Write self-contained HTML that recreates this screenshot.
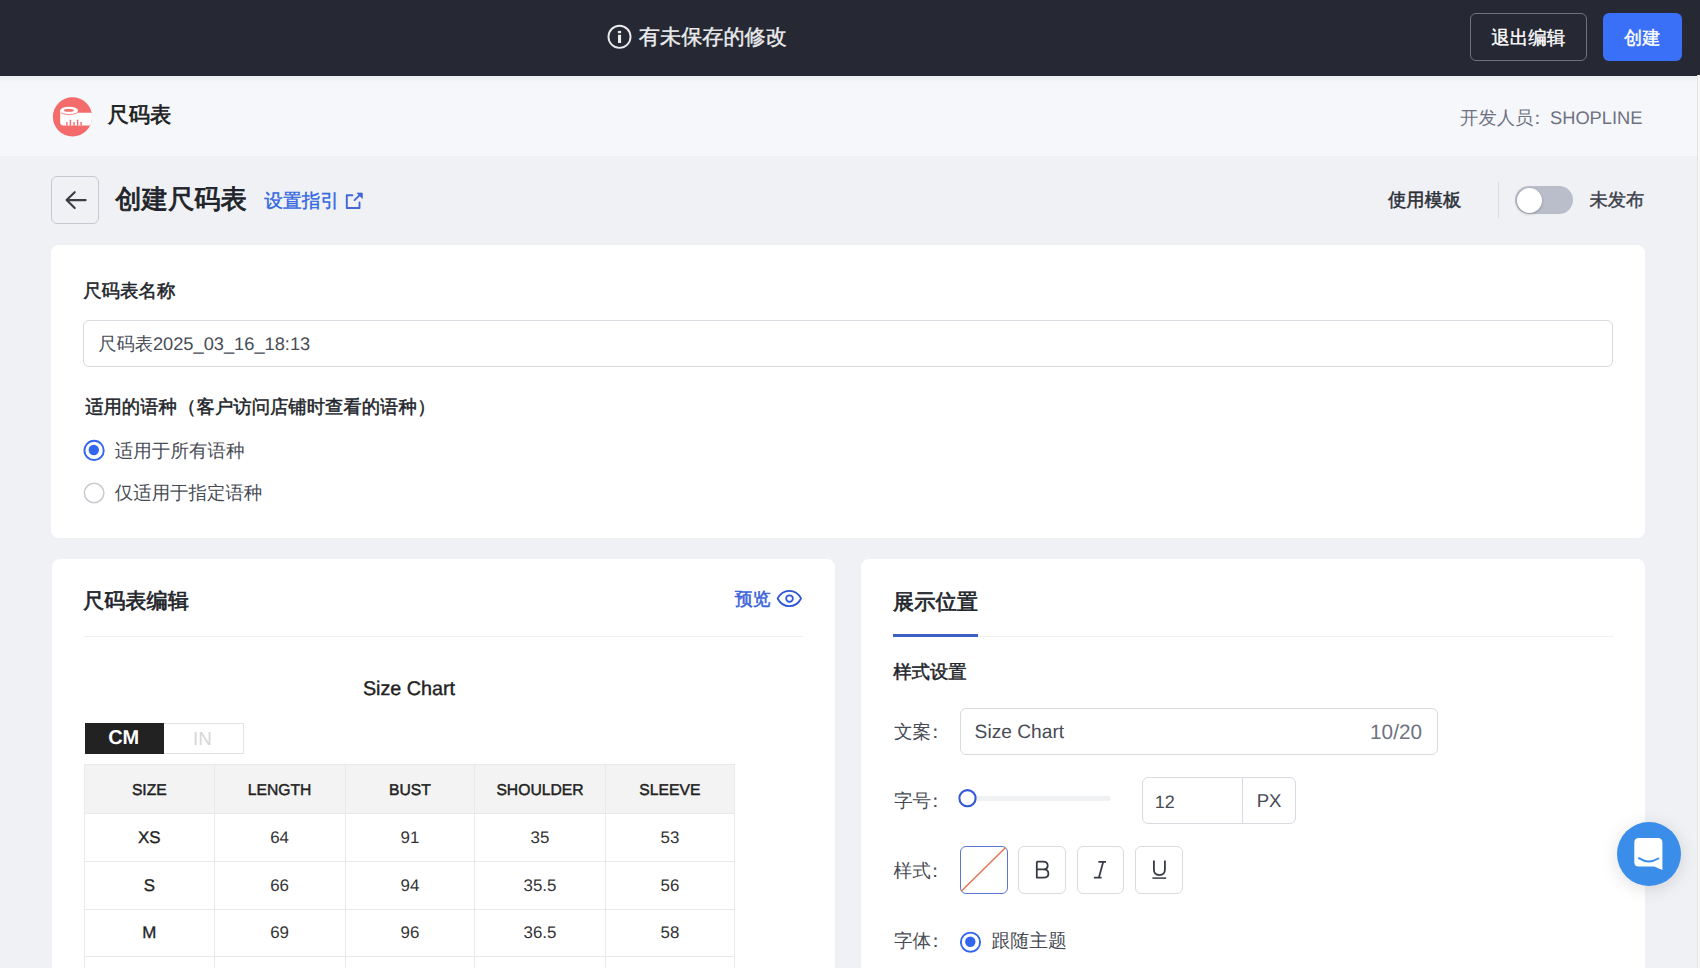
<!DOCTYPE html>
<html><head><meta charset="utf-8">
<style>
*{box-sizing:border-box;margin:0;padding:0}
html,body{width:1700px;height:968px;overflow:hidden}
body{position:relative;text-rendering:geometricPrecision;background:#f0f1f5;font-family:"Liberation Sans",sans-serif;color:#474b55}
.a{position:absolute;white-space:nowrap;line-height:1}
.m{-webkit-text-stroke:0.4px currentColor}
.s{font-weight:400;-webkit-text-stroke:0.5px currentColor}
.s1{-webkit-text-stroke:0.7px currentColor}
.s2{-webkit-text-stroke:0.85px currentColor}
.box{position:absolute}
.th{text-align:center;font-size:15.7px;padding-top:1.7px;color:#1f1f1f;-webkit-text-stroke:0.45px #1f1f1f}
.td{text-align:center;font-size:16.9px;color:#333}
.td.b{color:#1f1f1f;-webkit-text-stroke:0.35px #1f1f1f}

</style></head><body>

<!-- top bar -->
<div class="box" style="left:0;top:0;width:1700px;height:75.7px;background:#262833"></div>
<svg class="box" style="left:600px;top:17px" width="40" height="40" viewBox="600 17 40 40">
  <circle cx="619.5" cy="36.85" r="11.05" fill="none" stroke="#ebebed" stroke-width="1.9"/>
  <rect x="617.9" y="30.9" width="3.2" height="2.3" fill="#ebebed"/>
  <rect x="618" y="34.8" width="3.1" height="8.2" fill="#ebebed"/>
</svg>
<div id="t_info_text" class="a m" style="left:638.85px;top:27.40px;font-size:21.15px;color:#ebebed">有未保存的修改</div>
<div class="box" style="left:1470px;top:13px;width:117px;height:48px;border:1.5px solid #70737c;border-radius:6px"></div>
<div id="t_btn1_text" class="a m" style="left:1491.23px;top:28.72px;font-size:18.51px;color:#fff">退出编辑</div>
<div class="box" style="left:1603px;top:13px;width:79px;height:48px;background:#3a6ff8;border-radius:6px"></div>
<div id="t_btn2_text" class="a m" style="left:1624.06px;top:28.90px;font-size:18.19px;color:#fff">创建</div>

<!-- header -->
<div class="box" style="left:0;top:75.7px;width:1700px;height:80.4px;background:#f6f7fa"></div>
<div class="box" style="left:0;top:75.7px;width:1700px;height:7px;background:linear-gradient(rgba(0,0,0,.035),rgba(0,0,0,0))"></div>
<div class="box" style="left:1697px;top:75px;width:1px;height:893px;background:#e2e3e6"></div>
<div class="box" style="left:1698px;top:75px;width:2px;height:893px;background:#f8f8f9"></div>
<svg class="box" style="left:50px;top:94px" width="46" height="46" viewBox="0 0 46 46">
  <defs><clipPath id="lc"><circle cx="22.5" cy="22.8" r="19.6"/></clipPath></defs>
  <circle cx="22.5" cy="22.8" r="19.6" fill="#f46b6b"/>
  <g clip-path="url(#lc)">
    <path d="M10.2,16.4 V28.4 Q10.2,31.4 13.2,31.4 H46 V18.8 H27 V16.4 Z" fill="#fff"/>
    <ellipse cx="19.1" cy="16.4" rx="8.9" ry="3.6" fill="#fff"/>
    <ellipse cx="18.9" cy="16.4" rx="4.9" ry="1.3" fill="#f46b6b"/>
    <path d="M10.9,18.9 Q19,22.4 27.4,18.9" fill="none" stroke="#f46b6b" stroke-width="0.8"/>
    <rect x="16.2" y="28" width="1.4" height="3.5" fill="#f46b6b"/>
    <rect x="19.7" y="25.7" width="1.4" height="5.8" fill="#f46b6b"/>
    <rect x="23.3" y="28" width="1.4" height="3.5" fill="#f46b6b"/>
    <rect x="26.9" y="25.7" width="1.4" height="5.8" fill="#f46b6b"/>
    <rect x="30.4" y="28" width="1.4" height="3.5" fill="#f46b6b"/>
  </g>
</svg>
<div id="t_hdr_title" class="a s1" style="left:107.53px;top:105.46px;font-size:21.27px;color:#1c1d21">尺码表</div>
<div id="t_dev" class="a" style="left:1460.10px;top:108.70px;font-size:18.30px;color:#6d7282">开发人员<span style="margin-left:-5px">：</span><span style="margin-left:3.5px">SHOPLINE</span></div>

<!-- title row -->
<div class="box" style="left:51.2px;top:176.2px;width:47.6px;height:47.6px;border:1.3px solid #c6c9d1;border-radius:6px"></div>
<svg class="box" style="left:60px;top:185px" width="32" height="32" viewBox="60 185 32 32">
  <path d="M74.7,192.2 L66.6,200.1 L74.7,208 M66.8,200.1 H85.6" fill="none" stroke="#3a3d46" stroke-width="2.15" stroke-linecap="round" stroke-linejoin="round"/>
</svg>
<svg class="box" style="left:340px;top:185px" width="30" height="30" viewBox="340 185 30 30">
  <path d="M352.4,195.3 H346.8 V208 H359.5 V202.4" fill="none" stroke="#4268d8" stroke-width="1.9" stroke-linecap="round" stroke-linejoin="round"/>
  <path d="M354.6,200.2 L361,193.8" fill="none" stroke="#4268d8" stroke-width="1.9" stroke-linecap="round"/>
  <path d="M357,193.1 H362.3 V198.4 Z" fill="#4268d8" stroke="#4268d8" stroke-width="0.8" stroke-linejoin="round"/>
</svg>
<div id="t_title" class="a s2" style="left:115.29px;top:185.98px;font-size:26.32px;color:#202329">创建尺码表</div>
<div id="t_link" class="a m" style="left:264.36px;top:191.68px;font-size:18.69px;color:#3268e0">设置指引</div>
<div id="t_tmpl" class="a s" style="left:1388.09px;top:190.91px;font-size:18.27px;color:#2b2f38">使用模板</div>
<div class="box" style="left:1497.5px;top:182px;width:1.3px;height:36px;background:#d9dbe0"></div>
<div class="box" style="left:1515px;top:186.3px;width:58px;height:28.2px;background:#babecb;border-radius:15px"></div>
<div class="box" style="left:1517px;top:188px;width:25px;height:25px;background:#fff;border-radius:50%;box-shadow:0 1px 3px rgba(0,0,0,.25)"></div>
<div id="t_unpub" class="a m" style="left:1589.40px;top:191.43px;font-size:18.28px;color:#3b3f4a">未发布</div>

<!-- card 1 -->
<div class="box" style="left:51px;top:245px;width:1594.2px;height:292.6px;background:#fff;border-radius:8px"></div>
<div id="t_name_lbl" class="a s" style="left:83.13px;top:282.48px;font-size:18.44px;color:#22252b">尺码表名称</div>
<div class="box" style="left:83.3px;top:320px;width:1529.7px;height:47.3px;border:1.3px solid #d8dadf;border-radius:6px"></div>
<div id="t_input_txt" class="a" style="left:98.15px;top:334.77px;font-size:18.26px;color:#474b55">尺码表2025_03_16_18:13</div>
<div id="t_lang_lbl" class="a s" style="left:85.15px;top:398.45px;font-size:18.35px;color:#22252b">适用的语种<span style="margin-left:1.0px">（</span><span style="margin-left:0.4px">客户访问店铺时查看的语种</span><span style="margin-left:0.6px">）</span></div>
<svg class="box" style="left:80px;top:436px" width="30" height="72" viewBox="80 436 30 72">
  <circle cx="94.1" cy="450.4" r="9.65" fill="#fff" stroke="#3366ee" stroke-width="1.9"/>
  <circle cx="93.8" cy="450" r="5.2" fill="#3366ee"/>
  <circle cx="94.1" cy="493" r="9.75" fill="#fff" stroke="#c9cbd1" stroke-width="1.5"/>
</svg>
<div id="t_r1" class="a" style="left:114.79px;top:441.73px;font-size:18.55px;color:#474b55">适用于所有语种</div>
<div id="t_r2" class="a" style="left:114.81px;top:483.79px;font-size:18.45px;color:#474b55">仅适用于指定语种</div>

<!-- card 2 -->
<div class="box" style="left:51.6px;top:559.1px;width:783px;height:460px;background:#fff;border-radius:8px"></div>
<div id="t_edit_title" class="a s1" style="left:83.04px;top:591.42px;font-size:21.17px;color:#22252b">尺码表编辑</div>
<div id="t_preview" class="a s" style="left:734.87px;top:591.07px;font-size:17.86px;color:#3b63d9">预览</div>
<div class="box" style="left:83.5px;top:636px;width:719.3px;height:1.2px;background:#f0f1f4"></div>
<svg class="box" style="left:772px;top:584px" width="36" height="30" viewBox="772 584 36 30">
  <path d="M777.6,598.5 C781,592.3 785,590.9 789.3,590.9 C793.6,590.9 797.7,592.3 801.1,598.5 C797.7,604.8 793.6,606.2 789.3,606.2 C785,606.2 781,604.8 777.6,598.5 Z" fill="none" stroke="#2e55d6" stroke-width="1.75" stroke-linejoin="round"/>
  <circle cx="789.5" cy="598.6" r="3.35" fill="none" stroke="#2e55d6" stroke-width="1.75"/>
</svg>
<div class="box" style="left:84.5px;top:722.5px;width:79.5px;height:31.5px;background:#222"></div>
<div class="box" style="left:164px;top:722.5px;width:80px;height:31.5px;border:1.2px solid #e3e3e3;border-left:none"></div>
<div id="t_cm" class="a" style="left:108.13px;top:729.37px;font-size:19.96px;font-weight:bold;color:#fff">CM</div>
<div id="t_in" class="a" style="left:192.94px;top:729.71px;font-size:18.81px;color:#d6d6d6">IN</div>
<div id="t_sc" class="a m" style="left:362.90px;top:679.66px;font-size:19.75px;color:#222">Size Chart</div>

<div class="box" style="left:84.5px;top:764.9px;width:650.1px;height:48.9px;background:#f3f3f3"></div>
<div class="box" style="left:84px;top:764px;width:651px;height:1px;background:#e9e9e9"></div>
<div class="box" style="left:84px;top:813px;width:651px;height:1px;background:#e9e9e9"></div>
<div class="box" style="left:84px;top:861px;width:651px;height:1px;background:#e9e9e9"></div>
<div class="box" style="left:84px;top:909px;width:651px;height:1px;background:#e9e9e9"></div>
<div class="box" style="left:84px;top:956px;width:651px;height:1px;background:#e9e9e9"></div>
<div class="box" style="left:84px;top:1004px;width:651px;height:1px;background:#e9e9e9"></div>
<div class="box" style="left:84px;top:764px;width:1px;height:240px;background:#e9e9e9"></div>
<div class="box" style="left:214px;top:764px;width:1px;height:240px;background:#e9e9e9"></div>
<div class="box" style="left:345px;top:764px;width:1px;height:240px;background:#e9e9e9"></div>
<div class="box" style="left:474px;top:764px;width:1px;height:240px;background:#e9e9e9"></div>
<div class="box" style="left:605px;top:764px;width:1px;height:240px;background:#e9e9e9"></div>
<div class="box" style="left:734px;top:764px;width:1px;height:240px;background:#e9e9e9"></div>
<div class="a th" style="left:84.5px;width:129.7px;top:764.9px;height:48.9px;line-height:48.9px">SIZE</div>
<div class="a th" style="left:214.2px;width:130.8px;top:764.9px;height:48.9px;line-height:48.9px">LENGTH</div>
<div class="a th" style="left:345.0px;width:129.8px;top:764.9px;height:48.9px;line-height:48.9px">BUST</div>
<div class="a th" style="left:474.8px;width:130.4px;top:764.9px;height:48.9px;line-height:48.9px">SHOULDER</div>
<div class="a th" style="left:605.2px;width:129.4px;top:764.9px;height:48.9px;line-height:48.9px">SLEEVE</div>
<div class="a td b" style="left:84.5px;width:129.7px;top:813.8px;height:47.7px;line-height:47.7px">XS</div>
<div class="a td" style="left:214.2px;width:130.8px;top:813.8px;height:47.7px;line-height:47.7px">64</div>
<div class="a td" style="left:345.0px;width:129.8px;top:813.8px;height:47.7px;line-height:47.7px">91</div>
<div class="a td" style="left:474.8px;width:130.4px;top:813.8px;height:47.7px;line-height:47.7px">35</div>
<div class="a td" style="left:605.2px;width:129.4px;top:813.8px;height:47.7px;line-height:47.7px">53</div>
<div class="a td b" style="left:84.5px;width:129.7px;top:861.5px;height:47.7px;line-height:47.7px">S</div>
<div class="a td" style="left:214.2px;width:130.8px;top:861.5px;height:47.7px;line-height:47.7px">66</div>
<div class="a td" style="left:345.0px;width:129.8px;top:861.5px;height:47.7px;line-height:47.7px">94</div>
<div class="a td" style="left:474.8px;width:130.4px;top:861.5px;height:47.7px;line-height:47.7px">35.5</div>
<div class="a td" style="left:605.2px;width:129.4px;top:861.5px;height:47.7px;line-height:47.7px">56</div>
<div class="a td b" style="left:84.5px;width:129.7px;top:909.2px;height:47.6px;line-height:47.6px">M</div>
<div class="a td" style="left:214.2px;width:130.8px;top:909.2px;height:47.6px;line-height:47.6px">69</div>
<div class="a td" style="left:345.0px;width:129.8px;top:909.2px;height:47.6px;line-height:47.6px">96</div>
<div class="a td" style="left:474.8px;width:130.4px;top:909.2px;height:47.6px;line-height:47.6px">36.5</div>
<div class="a td" style="left:605.2px;width:129.4px;top:909.2px;height:47.6px;line-height:47.6px">58</div>
<div class="a td b" style="left:84.5px;width:129.7px;top:956.8px;height:47.7px;line-height:47.7px">L</div>
<div class="a td" style="left:214.2px;width:130.8px;top:956.8px;height:47.7px;line-height:47.7px">72</div>
<div class="a td" style="left:345.0px;width:129.8px;top:956.8px;height:47.7px;line-height:47.7px">99</div>
<div class="a td" style="left:474.8px;width:130.4px;top:956.8px;height:47.7px;line-height:47.7px">37.5</div>
<div class="a td" style="left:605.2px;width:129.4px;top:956.8px;height:47.7px;line-height:47.7px">60</div>

<!-- card 3 -->
<div class="box" style="left:860.8px;top:559.1px;width:784.6px;height:460px;background:#fff;border-radius:8px"></div>
<div id="t_disp" class="a s1" style="left:893.09px;top:591.92px;font-size:21.26px;color:#22252b">展示位置</div>
<div class="box" style="left:893px;top:636px;width:720.9px;height:1.2px;background:#f0f1f4"></div>
<div class="box" style="left:893px;top:634px;width:85px;height:3px;background:#3d60c6"></div>
<div id="t_style_set" class="a s" style="left:893.16px;top:662.79px;font-size:18.40px;color:#22252b">样式设置</div>
<div id="t_wa" class="a" style="left:893.90px;top:723.20px;font-size:18.60px;color:#474b55">文案<span style="margin-left:-5px">：</span></div>
<div id="t_zh" class="a" style="left:893.90px;top:792.25px;font-size:18.60px;color:#474b55">字号<span style="margin-left:-5px">：</span></div>
<div id="t_ys" class="a" style="left:893.55px;top:862.20px;font-size:18.60px;color:#474b55">样式<span style="margin-left:-5px">：</span></div>
<div id="t_zt" class="a" style="left:894.00px;top:931.70px;font-size:18.60px;color:#474b55">字体<span style="margin-left:-5px">：</span></div>
<div id="t_gs" class="a" style="left:991.53px;top:932.04px;font-size:18.85px;color:#474b55">跟随主题</div>

<div class="box" style="left:960.3px;top:708.2px;width:477.3px;height:46.8px;border:1.3px solid #d8dadf;border-radius:6px"></div>
<div id="t_inp_sc" class="a" style="left:974.61px;top:723.43px;font-size:19.18px;color:#474b55">Size Chart</div>
<div id="t_cnt" class="a" style="left:1370.07px;top:723.08px;font-size:20.74px;color:#6d7282">10/20</div>
<div class="box" style="left:962px;top:795.8px;width:149px;height:5px;background:#f0f1f3;border-radius:3px"></div>
<svg class="box" style="left:955px;top:786px" width="25" height="25" viewBox="955 786 25 25">
  <circle cx="967.5" cy="798.2" r="8.1" fill="#fff" stroke="#3558d6" stroke-width="2.1"/>
</svg>
<div class="box" style="left:1141.6px;top:777px;width:154.8px;height:47px;border:1.3px solid #d8dadf;border-radius:6px"></div>
<div class="box" style="left:1241.5px;top:777px;width:1.3px;height:47px;background:#d8dadf"></div>
<div id="t_n12" class="a" style="left:1154.82px;top:793.08px;font-size:17.98px;color:#474b55">12</div>
<div id="t_px" class="a" style="left:1256.70px;top:792.36px;font-size:18.57px;color:#474b55">PX</div>
<div class="box" style="left:960.2px;top:845.8px;width:47.6px;height:47.8px;border:1.3px solid #5a77d0;border-radius:6px;background:#fff"></div>
<svg class="box" style="left:955px;top:840px" width="60" height="60" viewBox="955 840 60 60">
  <path d="M961.3,891.2 L1005.6,847.4" stroke="#e0714f" stroke-width="1.4"/>
</svg>
<div class="box" style="left:1018.3px;top:845.8px;width:47.3px;height:47.8px;border:1.3px solid #d9dbe0;border-radius:6px"></div>
<div class="box" style="left:1077.3px;top:845.8px;width:47px;height:47.8px;border:1.3px solid #d9dbe0;border-radius:6px"></div>
<div class="box" style="left:1135.4px;top:845.8px;width:47.3px;height:47.8px;border:1.3px solid #d9dbe0;border-radius:6px"></div>
<svg class="box" style="left:1020px;top:850px" width="170" height="40" viewBox="1020 850 170 40">
  <path d="M1036.8,861.6 H1043 C1046.3,861.6 1047.7,863.4 1047.7,865.6 C1047.7,867.8 1046.3,869.4 1043.2,869.4 H1036.8 M1036.8,869.4 H1043.6 C1047,869.4 1048.4,871.3 1048.4,873.7 C1048.4,876.1 1047,877.6 1043.6,877.6 H1036.8 V861.6" fill="none" stroke="#363a44" stroke-width="1.8" stroke-linejoin="round"/>
  <path d="M1098.4,861.9 H1106 M1093.9,877.6 H1101.6 M1103.2,861.9 L1098.9,877.6" fill="none" stroke="#363a44" stroke-width="1.75"/>
  <path d="M1153.9,860.5 V869.6 C1153.9,873.3 1156.3,875.1 1159.4,875.1 C1162.5,875.1 1164.9,873.3 1164.9,869.6 V860.5" fill="none" stroke="#363a44" stroke-width="1.8"/>
  <path d="M1152.4,878.1 H1166.2" fill="none" stroke="#363a44" stroke-width="1.5"/>
</svg>
<svg class="box" style="left:955px;top:928px" width="30" height="30" viewBox="955 928 30 30">
  <circle cx="970.5" cy="942.2" r="9.6" fill="#fff" stroke="#3366ee" stroke-width="1.9"/>
  <circle cx="970.3" cy="941.8" r="5.2" fill="#3366ee"/>
</svg>
<div class="box" style="left:1616.5px;top:821.5px;width:64px;height:64px;border-radius:50%;background:#3a8eea;box-shadow:0 3px 18px rgba(0,0,0,.13)"></div>
<svg class="box" style="left:1620px;top:825px" width="58" height="58" viewBox="1620 825 58 58">
  <path d="M1638.8,838.1 H1657.9 Q1662.4,838.1 1662.4,842.6 V869.9 L1654.2,866.5 H1638.8 Q1634.3,866.5 1634.3,862 V842.6 Q1634.3,838.1 1638.8,838.1 Z" fill="#fff"/>
  <path d="M1638.9,858.2 Q1648.5,864.6 1658.2,858.5" fill="none" stroke="#3a8eea" stroke-width="2" stroke-linecap="round"/>
</svg>
</body></html>
